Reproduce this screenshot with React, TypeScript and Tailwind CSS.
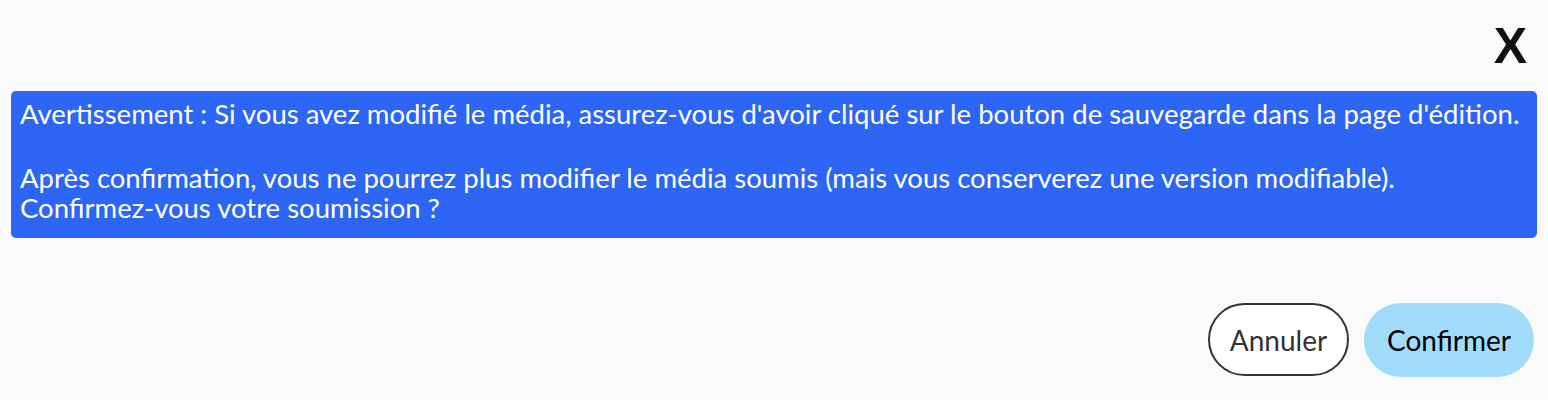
export default function App() {
  return (
    <div className="min-h-[400px] w-full bg-[#fafafa] font-['Lato',sans-serif]">
      <div className="flex justify-end pr-[21px] pt-[21px]">
        <button className="font-['Liberation_Sans',Arial,sans-serif] text-[50px] font-bold leading-[50px] text-[#111]">
          X
        </button>
      </div>
      <div className="mx-[11px] mt-[20px] rounded-[5px] bg-[#2d65f5] px-[9px] pb-[15px] pt-[8px] text-[27.5px] leading-[30px] text-white">
        <p>
          Avertissement : Si vous avez modifié le média, assurez-vous d'avoir cliqué sur le bouton de sauvegarde dans la
          page d'édition.
        </p>
        <p className="mt-[34px]">
          Après confirmation, vous ne pourrez plus modifier le média soumis (mais vous conserverez une version
          modifiable).
          <br />
          Confirmez-vous votre soumission ?
        </p>
      </div>
      <div className="mt-[65px] flex justify-end gap-[15px] pr-[14px]">
        <button className="h-[73px] w-[141px] rounded-full border-2 border-[#333] bg-white text-[28px] text-[#333]">
          Annuler
        </button>
        <button className="h-[74px] w-[170px] rounded-full bg-[#a0dcfa] text-[28px] text-black">Confirmer</button>
      </div>
    </div>
  );
}
